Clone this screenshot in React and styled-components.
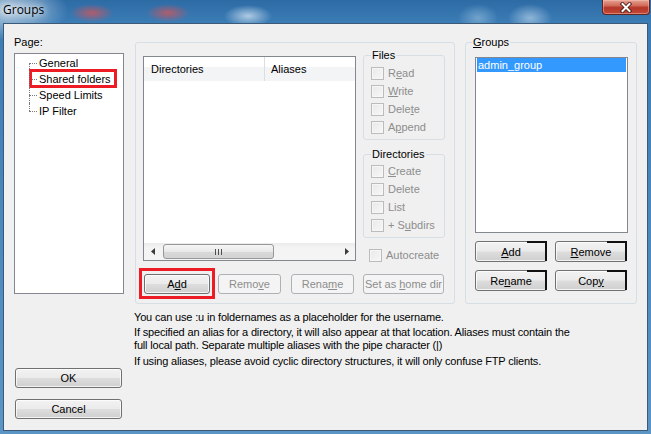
import React from 'react';
import styled, { createGlobalStyle } from 'styled-components';

const GlobalStyle = createGlobalStyle`
  html, body {
    margin: 0;
    padding: 0;
  }
  body {
    background: #3b7cb5;
    font-family: "Liberation Sans", Arial, sans-serif;
    font-size: 11px;
    color: #000;
  }
`;

const Window = styled.div`
  width: 651px;
  height: 434px;
  box-sizing: border-box;
  display: flex;
  flex-direction: column;
  overflow: hidden;
  background:
    radial-gradient(ellipse 22px 9px at 92px 13px, rgba(206, 86, 92, 0.8), transparent),
    radial-gradient(ellipse 22px 9px at 168px 13px, rgba(206, 86, 92, 0.8), transparent),
    radial-gradient(ellipse 24px 11px at 248px 16px, rgba(214, 230, 244, 0.75), transparent),
    radial-gradient(ellipse 20px 14px at 478px 18px, rgba(160, 198, 226, 0.55), transparent),
    radial-gradient(ellipse 22px 14px at 530px 18px, rgba(190, 214, 236, 0.65), transparent),
    radial-gradient(ellipse 60px 30px at 8px 10px, rgba(196, 214, 230, 0.95), transparent),
    linear-gradient(180deg, #2d6ba5 0px, #3b7cb5 22px, #5b95c6 100%);
`;

const TitleBar = styled.div`
  height: 23px;
  flex: none;
  display: flex;
  justify-content: space-between;
  align-items: flex-start;
`;

const Title = styled.div`
  font-family: "Open Sans", "Noto Sans", sans-serif;
  font-size: 12px;
  line-height: 16px;
  padding: 2px 0 0 3px;
  color: #000;
  text-shadow: 0 0 6px #fff, 0 0 10px rgba(255, 255, 255, 0.8);
`;

const CloseButton = styled.div`
  width: 48px;
  height: 15px;
  margin-right: 1px;
  box-sizing: border-box;
  border: 1px solid #5e2620;
  border-top: none;
  border-radius: 0 0 4px 4px;
  background: linear-gradient(180deg, #e4a394 0%, #d26a58 40%, #b3362a 55%, #c44a36 100%);
  box-shadow: inset 0 0 0 1px rgba(255, 200, 190, 0.45);
  display: flex;
  align-items: center;
  justify-content: center;
`;

const Client = styled.div`
  flex: 1;
  margin: 0 3px 3px 3px;
  box-sizing: border-box;
  border: 1px solid #3c5a78;
  background: #f0f0f0;
  display: grid;
  grid-template-columns: 110px 1fr;
  column-gap: 11px;
  padding: 0 10px;
`;

const LeftColumn = styled.div`
  display: flex;
  flex-direction: column;
  padding-top: 12px;
`;

const PageLabel = styled.div`
  line-height: 13px;
`;

const Tree = styled.div`
  margin-top: 4px;
  height: 241px;
  box-sizing: border-box;
  border: 1px solid #828790;
  background: #fff;
  padding-top: 1px;
`;

const TreeRow = styled.div`
  position: relative;
  height: 16px;
  line-height: 16px;
  padding-left: 24px;
  white-space: nowrap;

  &::before {
    content: '';
    position: absolute;
    left: 14px;
    top: 8px;
    width: 8px;
    border-top: 1px dotted #7a7a7a;
  }

  &::after {
    content: '';
    position: absolute;
    left: 14px;
    top: ${({ $first }) => ($first ? '8px' : '0')};
    height: ${({ $first, $last }) => ($last ? '8px' : $first ? '8px' : '16px')};
    border-left: 1px dotted #7a7a7a;
  }
`;

const TreeLabel = styled.span`
  position: relative;
  display: inline-block;

  ${({ $marked }) =>
    $marked &&
    `
    &::after {
      content: '';
      position: absolute;
      left: -10px;
      right: -6px;
      top: -2px;
      bottom: -1px;
      border: 3px solid #ed1c24;
    }
  `}
`;

const Button = styled.button`
  position: relative;
  box-sizing: border-box;
  width: ${({ $w }) => $w}px;
  height: ${({ $h }) => $h || 20}px;
  margin: 0;
  padding: 0;
  font: inherit;
  color: #000;
  border: 1px solid #707070;
  border-radius: 3px;
  background: linear-gradient(180deg, #f2f2f2 0%, #ebebeb 48%, #dddddd 52%, #cfcfcf 100%);
  box-shadow: inset 0 0 0 1px rgba(255, 255, 255, 0.75);

  &:disabled {
    color: #8d8d8d;
    border-color: #adb2b5;
    background: #f4f4f4;
    box-shadow: none;
  }
`;

const DialogButton = styled(Button)`
  margin-top: ${({ $mt }) => $mt}px;
  margin-left: 1px;
`;

const MarkedButton = styled(Button)`
  &::after {
    content: '';
    position: absolute;
    left: -6px;
    right: -6px;
    top: -7px;
    bottom: -6px;
    border: 3px solid #ed1c24;
  }
`;

const GroupButton = styled(Button)`
  &::after {
    content: '';
    position: absolute;
    top: -1px;
    right: -1px;
    width: 20px;
    height: calc(100% + 1px);
    border-top: 2px solid #111;
    border-right: 2px solid #111;
    box-sizing: border-box;
  }
`;

const Mnemonic = styled.span`
  text-decoration: underline;
  text-underline-offset: 1px;
`;

const RightColumn = styled.div`
  display: flex;
  flex-direction: column;
  padding-top: 12px;
`;

const TopRow = styled.div`
  display: flex;
  gap: 10px;
`;

const MainPanel = styled.div`
  margin-top: 6px;
  width: 320px;
  height: 262px;
  box-sizing: border-box;
  border: 1px solid #d5dfe5;
  border-radius: 3px;
  padding: 13px 0 0 7px;
`;

const PanelRow = styled.div`
  display: flex;
  align-items: flex-start;
  height: 205px;
`;

const ListView = styled.div`
  width: 213px;
  height: 205px;
  box-sizing: border-box;
  border: 1px solid #828790;
  background: #fff;
  display: flex;
  flex-direction: column;
`;

const ListHeader = styled.div`
  display: flex;
  height: 24px;
  background: linear-gradient(180deg, #ffffff 0%, #ffffff 42%, #f3f4f6 42%, #f3f4f6 100%);
`;

const HeaderCell = styled.div`
  display: flex;
  align-items: center;
  box-sizing: border-box;
  padding-left: ${({ $pl }) => $pl}px;
  ${({ $w }) => ($w ? `width: ${$w}px; border-right: 1px solid #dcdde0;` : 'flex: 1;')}
`;

const ListBody = styled.div`
  flex: 1;
`;

const HScroll = styled.div`
  height: 17px;
  display: flex;
  align-items: center;
  background: linear-gradient(180deg, #ebebeb 0%, #f4f4f4 30%, #f4f4f4 100%);
`;

const ScrollArrow = styled.div`
  width: 17px;
  height: 17px;
  display: flex;
  align-items: center;
  justify-content: center;
  flex: none;
`;

const ScrollTrack = styled.div`
  flex: 1;
  height: 17px;
  display: flex;
  align-items: center;
`;

const ScrollThumb = styled.div`
  margin-left: 2px;
  width: 111px;
  height: 15px;
  box-sizing: border-box;
  border: 1px solid #979797;
  border-radius: 3px;
  background: linear-gradient(180deg, #f6f6f6 0%, #e9e9e9 50%, #d9d9d9 51%, #d3d3d3 100%);
  display: flex;
  align-items: center;
  justify-content: center;
`;

const Grip = styled.div`
  width: 7px;
  height: 6px;
  background: linear-gradient(90deg, #4e4e4e 1px, transparent 1px);
  background-size: 3px 100%;
`;

const SideColumn = styled.div`
  width: 82px;
  margin: -7px 0 0 7px;
  display: flex;
  flex-direction: column;
`;

const GroupBox = styled.fieldset`
  margin: ${({ $mt }) => $mt || 0}px 0 0 0;
  min-width: 0;
  box-sizing: border-box;
  border: 1px solid #d5dfe5;
  border-radius: 3px;
  padding: ${({ $pt }) => $pt}px 0 ${({ $pb }) => $pb}px 7px;
`;

const Legend = styled.legend`
  padding: 0 1px;
  margin-left: ${({ $ml }) => $ml || 0}px;
  line-height: 13px;
`;

const CheckRow = styled.label`
  display: flex;
  align-items: center;
  height: 18px;
  gap: 4px;
  color: #8d8d8d;
  margin-top: ${({ $mt }) => $mt || 0}px;
  padding-left: ${({ $pl }) => $pl || 0}px;
`;

const CheckBox = styled.span`
  width: 13px;
  height: 13px;
  box-sizing: border-box;
  border: 1px solid #bcbcbc;
  background: linear-gradient(135deg, #e9e9e9 0%, #f7f7f7 100%);
  box-shadow: inset 0 0 0 1px #f6f6f6;
  flex: none;
`;

const ButtonRow = styled.div`
  display: flex;
  margin-top: 13px;
  padding-left: 1px;
`;

const Spacer = styled.div`
  width: ${({ $w }) => $w}px;
  flex: none;
`;

const GroupsBox = styled.fieldset`
  margin: 0;
  min-width: 0;
  width: 172px;
  height: 268px;
  box-sizing: border-box;
  border: 1px solid #d5dfe5;
  border-radius: 3px;
  padding: 8px 9px 0 9px;
`;

const GroupsList = styled.div`
  width: 153px;
  height: 176px;
  box-sizing: border-box;
  border: 1px solid #828790;
  background: #fff;
  padding: 0 1px;
`;

const GroupItem = styled.div`
  height: 14px;
  line-height: 14px;
  padding-left: 1px;
  background: ${({ $selected }) => ($selected ? '#3399ff' : 'transparent')};
  color: ${({ $selected }) => ($selected ? '#fff' : '#000')};
`;

const GroupButtons = styled.div`
  margin-top: 8px;
  display: grid;
  grid-template-columns: 72px 72px;
  column-gap: 8px;
  row-gap: 8px;
`;

const Info = styled.div`
  margin: 7px 0 0 -1px;
  letter-spacing: -0.17px;
`;

const InfoText = styled.p`
  margin: 0 0 ${({ $mb }) => $mb || 0}px 0;
  line-height: 13px;
  white-space: nowrap;
`;

function CloseIcon() {
  return (
    <svg width="14" height="11" viewBox="0 0 14 11">
      <path d="M3.5 2 L10.5 9 M10.5 2 L3.5 9" stroke="#4a1d17" strokeWidth="3.8" strokeLinecap="square" fill="none" />
      <path d="M3.5 2 L10.5 9 M10.5 2 L3.5 9" stroke="#fff" strokeWidth="2" strokeLinecap="square" fill="none" />
    </svg>
  );
}

function Arrow({ dir }) {
  const d = dir === 'left' ? 'M4 0 L0 3.5 L4 7 Z' : 'M0 0 L4 3.5 L0 7 Z';
  return (
    <svg width="4" height="7" viewBox="0 0 4 7">
      <path d={d} fill="#3c3c3c" />
    </svg>
  );
}

const pages = ['General', 'Shared folders', 'Speed Limits', 'IP Filter'];

const fileRights = [
  ['R', 'e', 'ad'],
  ['', 'W', 'rite'],
  ['Dele', 't', 'e'],
  ['A', 'p', 'pend'],
];

const dirRights = [
  ['', 'C', 'reate'],
  ['Delete', '', ''],
  ['List', '', ''],
  ['+ S', 'u', 'bdirs'],
];

function Label({ parts }) {
  const [before, key, after] = parts;
  return (
    <span>
      {before}
      {key && <Mnemonic>{key}</Mnemonic>}
      {after}
    </span>
  );
}

export default function App() {
  return (
    <>
      <GlobalStyle />
      <Window>
        <TitleBar>
          <Title>Groups</Title>
          <CloseButton>
            <CloseIcon />
          </CloseButton>
        </TitleBar>
        <Client>
          <LeftColumn>
            <PageLabel>Page:</PageLabel>
            <Tree>
              {pages.map((page, i) => (
                <TreeRow key={page} $first={i === 0} $last={i === pages.length - 1}>
                  <TreeLabel $marked={page === 'Shared folders'}>{page}</TreeLabel>
                </TreeRow>
              ))}
            </Tree>
            <DialogButton $w={107} $mt={74}>OK</DialogButton>
            <DialogButton $w={107} $mt={11}>Cancel</DialogButton>
          </LeftColumn>

          <RightColumn>
            <TopRow>
              <MainPanel>
                <PanelRow>
                  <ListView>
                    <ListHeader>
                      <HeaderCell $w={121} $pl={7}>Directories</HeaderCell>
                      <HeaderCell $pl={6}>Aliases</HeaderCell>
                    </ListHeader>
                    <ListBody />
                    <HScroll>
                      <ScrollArrow><Arrow dir="left" /></ScrollArrow>
                      <ScrollTrack>
                        <ScrollThumb><Grip /></ScrollThumb>
                      </ScrollTrack>
                      <ScrollArrow><Arrow dir="right" /></ScrollArrow>
                    </HScroll>
                  </ListView>
                  <SideColumn>
                    <GroupBox $pt={2} $pb={3}>
                      <Legend>Files</Legend>
                      {fileRights.map((parts) => (
                        <CheckRow key={parts.join('')}>
                          <CheckBox />
                          <Label parts={parts} />
                        </CheckRow>
                      ))}
                    </GroupBox>
                    <GroupBox $mt={8} $pt={1} $pb={3}>
                      <Legend>Directories</Legend>
                      {dirRights.map((parts) => (
                        <CheckRow key={parts.join('')}>
                          <CheckBox />
                          <Label parts={parts} />
                        </CheckRow>
                      ))}
                    </GroupBox>
                    <CheckRow $mt={8} $pl={6}>
                      <CheckBox />
                      <span>Autocreate</span>
                    </CheckRow>
                  </SideColumn>
                </PanelRow>
                <ButtonRow>
                  <MarkedButton $w={66}>
                    A<Mnemonic>d</Mnemonic>d
                  </MarkedButton>
                  <Spacer $w={8} />
                  <Button $w={63} disabled>
                    Remo<Mnemonic>v</Mnemonic>e
                  </Button>
                  <Spacer $w={10} />
                  <Button $w={63} disabled>
                    Rena<Mnemonic>m</Mnemonic>e
                  </Button>
                  <Spacer $w={9} />
                  <Button $w={81} disabled>
                    Set as <Mnemonic>h</Mnemonic>ome dir
                  </Button>
                </ButtonRow>
              </MainPanel>

              <GroupsBox>
                <Legend $ml={-3}>
                  <Mnemonic>G</Mnemonic>roups
                </Legend>
                <GroupsList>
                  <GroupItem $selected>admin_group</GroupItem>
                </GroupsList>
                <GroupButtons>
                  <GroupButton $w={72} $h={21}>
                    <Mnemonic>A</Mnemonic>dd
                  </GroupButton>
                  <GroupButton $w={72} $h={21}>
                    <Mnemonic>R</Mnemonic>emove
                  </GroupButton>
                  <GroupButton $w={72} $h={21}>
                    Re<Mnemonic>n</Mnemonic>ame
                  </GroupButton>
                  <GroupButton $w={72} $h={21}>
                    Cop<Mnemonic>y</Mnemonic>
                  </GroupButton>
                </GroupButtons>
              </GroupsBox>
            </TopRow>

            <Info>
              <InfoText $mb={2}>You can use :u in foldernames as a placeholder for the username.</InfoText>
              <InfoText $mb={3}>
                If specified an alias for a directory, it will also appear at that location. Aliases must contain the
                <br />
                full local path. Separate multiple aliases with the pipe character (|)
              </InfoText>
              <InfoText>If using aliases, please avoid cyclic directory structures, it will only confuse FTP clients.</InfoText>
            </Info>
          </RightColumn>
        </Client>
      </Window>
    </>
  );
}
